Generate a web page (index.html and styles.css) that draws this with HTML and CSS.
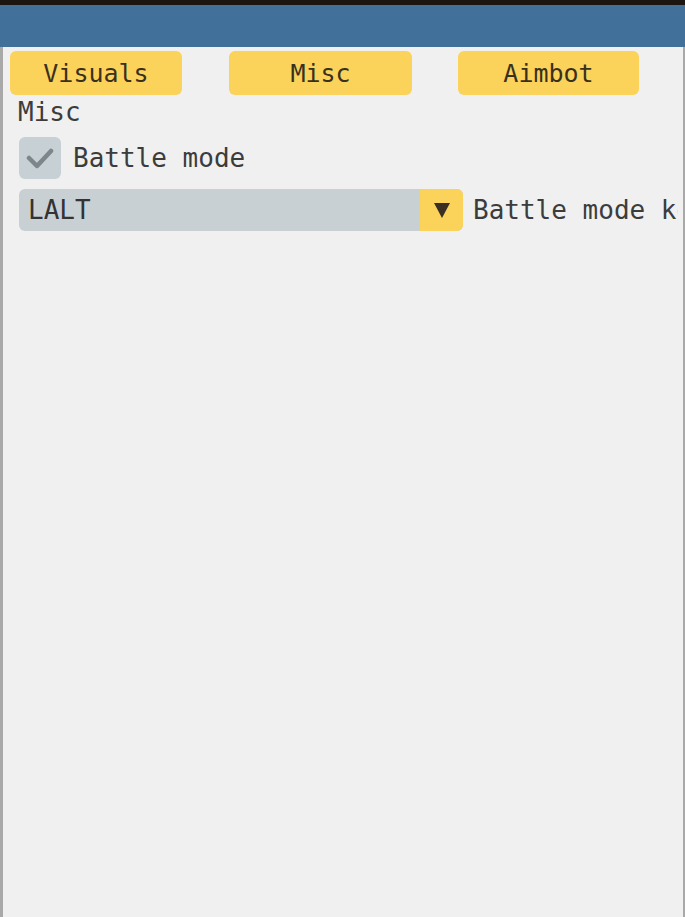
FILE: index.html
```html
<!DOCTYPE html>
<html>
<head>
<meta charset="utf-8">
<link rel="stylesheet" href="styles.css">
</head>
<body>
<div class="topstrip"></div>
<div class="titlebar"></div>
<div class="window">
  <div class="tabs">
    <div class="tab">Visuals</div>
    <div class="tab">Misc</div>
    <div class="tab">Aimbot</div>
  </div>
  <div class="section">Misc</div>
  <div class="row check-row">
    <div class="checkbox">
      <svg width="28" height="24" viewBox="0 0 28 24"><path d="M3 12 L11 20 L25 5" fill="none" stroke="#7d868a" stroke-width="4.5" stroke-linecap="round" stroke-linejoin="round"/></svg>
    </div>
    <span class="label">Battle mode</span>
  </div>
  <div class="row combo-row">
    <div class="combo">
      <span class="combo-value">LALT</span>
      <div class="combo-arrow">
        <svg width="18" height="18" viewBox="0 0 18 18"><path d="M1 2 L17 2 L9 17 Z" fill="#3b2f22"/></svg>
      </div>
    </div>
    <span class="label clip">Battle mode key</span>
  </div>
</div>
</body>
</html>
```
FILE: styles.css
```css
html, body {
  margin: 0;
  padding: 0;
  width: 685px;
  height: 917px;
  overflow: hidden;
  background: #f0f0f0;
}
body {
  display: flex;
  flex-direction: column;
  font-family: "DejaVu Sans Mono", "Liberation Mono", monospace;
  font-size: 26px;
  color: #3c3c3c;
}
.topstrip {
  height: 5px;
  background: #1c1612;
  flex: none;
}
.titlebar {
  height: 42px;
  background: #41709a;
  flex: none;
}
.window {
  flex: 1;
  background: #f0f0f0;
  border-left: 3px solid #a9a9a9;
  border-right: 2px solid #a9a9a9;
  padding: 4px 0 0 7px;
  overflow: hidden;
  white-space: nowrap;
}
.tabs {
  display: flex;
  gap: 47px;
  height: 44px;
}
.tab {
  width: 172px;
  height: 44px;
  background: #fbd35a;
  border-radius: 6px;
  display: flex;
  align-items: center;
  justify-content: center;
  color: #3a3020;
  font-size: 25px;
}
.tab:nth-child(2) { width: 183px; }
.tab:nth-child(3) { width: 181px; margin-left: -1px; }
.section {
  margin-left: 8px;
  height: 34px;
  line-height: 34px;
  color: #3c3c3c;
}
.row {
  display: flex;
  align-items: center;
  margin-left: 9px;
}
.check-row {
  height: 42px;
  margin-top: 8px;
}
.checkbox {
  width: 42px;
  height: 42px;
  background: #c7d0d4;
  border-radius: 6px;
  display: flex;
  align-items: center;
  justify-content: center;
  flex: none;
}
.label {
  margin-left: 12px;
  color: #3c3c3c;
}
.combo-row {
  height: 42px;
  margin-top: 10px;
}
.combo {
  width: 444px;
  height: 42px;
  background: #c8d0d3;
  border-radius: 6px;
  display: flex;
  align-items: center;
  flex: none;
}
.combo-value {
  flex: 1;
  padding-left: 9px;
  color: #333333;
}
.combo-arrow {
  width: 43px;
  height: 42px;
  background: #fbd35a;
  border-radius: 0 6px 6px 0;
  display: flex;
  align-items: center;
  justify-content: center;
}
.combo-row .label {
  margin-left: 10px;
}
.clip {
  max-width: 205px;
  overflow: hidden;
}
```
